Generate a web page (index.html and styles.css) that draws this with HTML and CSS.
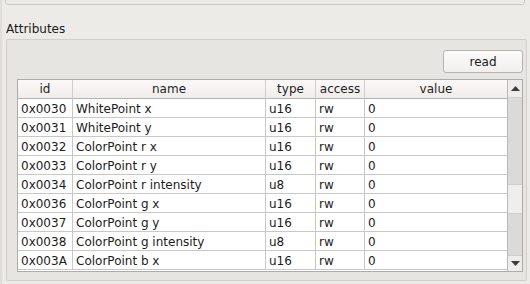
FILE: index.html
```html
<!DOCTYPE html>
<html>
<head>
<meta charset="utf-8">
<link rel="stylesheet" href="styles.css">
</head>
<body>
<div class="app">
  <div class="topbox"></div>
  <div class="label">Attributes</div>
  <div class="group">
    <div class="toolbar"><button class="btn">read</button></div>
    <div class="table">
      <div class="viewport">
        <div class="grid">
          <div class="hd">id</div><div class="hd">name</div><div class="hd">type</div><div class="hd">access</div><div class="hd last">value</div>
          <div class="c">0x0030</div><div class="c">WhitePoint x</div><div class="c">u16</div><div class="c">rw</div><div class="c last">0</div>
          <div class="c">0x0031</div><div class="c">WhitePoint y</div><div class="c">u16</div><div class="c">rw</div><div class="c last">0</div>
          <div class="c">0x0032</div><div class="c">ColorPoint r x</div><div class="c">u16</div><div class="c">rw</div><div class="c last">0</div>
          <div class="c">0x0033</div><div class="c">ColorPoint r y</div><div class="c">u16</div><div class="c">rw</div><div class="c last">0</div>
          <div class="c">0x0034</div><div class="c">ColorPoint r intensity</div><div class="c">u8</div><div class="c">rw</div><div class="c last">0</div>
          <div class="c">0x0036</div><div class="c">ColorPoint g x</div><div class="c">u16</div><div class="c">rw</div><div class="c last">0</div>
          <div class="c">0x0037</div><div class="c">ColorPoint g y</div><div class="c">u16</div><div class="c">rw</div><div class="c last">0</div>
          <div class="c">0x0038</div><div class="c">ColorPoint g intensity</div><div class="c">u8</div><div class="c">rw</div><div class="c last">0</div>
          <div class="c">0x003A</div><div class="c">ColorPoint b x</div><div class="c">u16</div><div class="c">rw</div><div class="c last">0</div>
        </div>
      </div>
      <div class="scrollbar">
        <div class="arrow up"><svg width="9" height="5" viewBox="0 0 9 5"><path d="M0 5 L4.5 0 L9 5 Z" fill="#3a3a3a"/></svg></div>
        <div class="track"><div class="thumb"></div></div>
        <div class="arrow down"><svg width="9" height="5" viewBox="0 0 9 5"><path d="M0 0 L9 0 L4.5 5 Z" fill="#3a3a3a"/></svg></div>
      </div>
    </div>
  </div>
</div>
</body>
</html>
```
FILE: styles.css
```css
html, body {
  margin: 0;
  padding: 0;
}
body {
  width: 530px;
  height: 284px;
  overflow: hidden;
  background: #edebe7;
  font-family: "DejaVu Sans", sans-serif;
  font-size: 12px;
  color: #1c1c1c;
}
.app {
  height: 284px;
  box-sizing: border-box;
  border-left: 2px solid #e0ded9;
  display: flex;
  flex-direction: column;
}
.topbox {
  margin-left: 3px;
  margin-top: -6px;
  width: 520px;
  height: 11px;
  box-sizing: border-box;
  border: 1px solid #cdcac5;
  border-radius: 3px;
  background: #edebe7;
}
.label {
  margin-top: 17px;
  height: 14px;
  line-height: 14px;
  padding-left: 4px;
  color: #1a1a1a;
}
.group {
  margin-top: 3px;
  margin-left: 4px;
  width: 521px;
  height: 242px;
  box-sizing: border-box;
  border: 1px solid #d2cfca;
  border-radius: 2px;
  background: #e7e5e1;
  padding: 10px 3px 0 10px;
  display: flex;
  flex-direction: column;
}
.toolbar {
  display: flex;
  justify-content: flex-end;
}
.btn {
  width: 80px;
  height: 23px;
  box-sizing: border-box;
  border: 1px solid #b7b4af;
  border-radius: 3px;
  background: linear-gradient(#fbfbfa, #f0efed);
  font-family: "DejaVu Sans", sans-serif;
  font-size: 12px;
  color: #1a1a1a;
  padding: 0;
}
.table {
  margin-top: 6px;
  width: 506px;
  height: 193px;
  box-sizing: border-box;
  border: 1px solid #acacac;
  background: #ffffff;
  display: flex;
}
.viewport {
  width: 489px;
  overflow: hidden;
}
.grid {
  display: grid;
  grid-template-columns: 55px 193px 50px 49px 142px;
  grid-auto-rows: 19px;
}
.hd, .c {
  box-sizing: border-box;
  border-right: 1px solid #c8c8c8;
  border-bottom: 1px solid #c8c8c8;
  line-height: 18px;
  white-space: nowrap;
  overflow: hidden;
}
.hd {
  text-align: center;
  background: linear-gradient(#fbf9f8, #f0ecea);
  border-bottom-color: #b4b4b4;
  border-right-color: #d0cdcb;
  color: #1e1e1e;
}
.c {
  padding-left: 3px;
  line-height: 20px;
}
.last {
  border-right: none;
}
.scrollbar {
  width: 15px;
  box-sizing: border-box;
  border-left: 1px solid #b9b9b9;
  background: #dadada;
  display: flex;
  flex-direction: column;
}
.arrow {
  height: 18px;
  background: #efedeb;
  display: flex;
  align-items: center;
  justify-content: center;
}
.arrow.up {
  border-bottom: 1px solid #cfcfcf;
  height: 17px;
}
.arrow.down {
  border-top: 1px solid #cfcfcf;
  height: 15px;
}
.track {
  flex: 1;
  position: relative;
}
.thumb {
  margin-top: 86px;
  height: 28px;
  background: #eeeeee;
  border-top: 1px solid #d0d0d0;
  border-bottom: 1px solid #d0d0d0;
}
```
